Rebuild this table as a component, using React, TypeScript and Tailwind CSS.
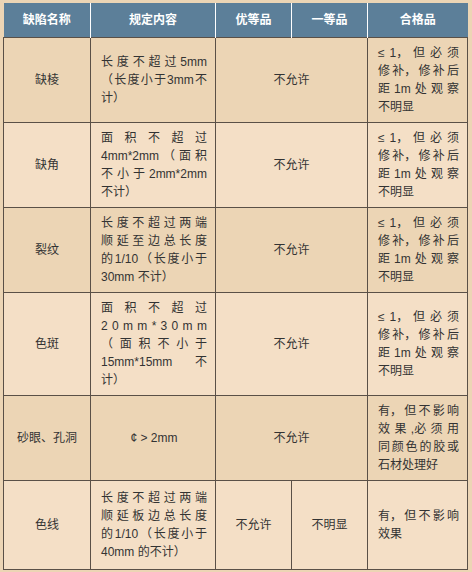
import React from "react";

const J = ({ t }: { t: string }) => (
  <div className="flex justify-between h-[18px]">
    {t.split(" ").map((x, i) => (
      <span key={i}>{x}</span>
    ))}
  </div>
);
const L = ({ t }: { t: string }) => <div className="h-[18px] whitespace-pre">{t}</div>;

const Para = ({ lines }: { lines: string[] }) => (
  <div className="text-left">
    {lines.map((l, i) => (i === lines.length - 1 ? <L key={i} t={l} /> : <J key={i} t={l} />))}
  </div>
);

const ok1 = ["≤ 1， 但 必 须", "修 补， 修 补 后", "距 1m 处 观 察", "不明显"];

type Row = {
  name: string;
  spec: string[] | string;
  merged?: string;
  a?: string;
  b?: string;
  ok: string[];
  h: string;
  bg: string;
};

const rows: Row[] = [
  { name: "缺棱", spec: ["长 度 不 超 过 5mm", "（ 长 度 小 于 3mm 不", "计）"], merged: "不允许", ok: ok1, h: "h-[84px]", bg: "bg-[#ecd5b5]" },
  { name: "缺角", spec: ["面 积 不 超 过", "4mm*2mm （ 面 积", "不 小 于 2mm*2mm", "不计）"], merged: "不允许", ok: ok1, h: "h-[85px]", bg: "bg-[#f4dfc6]" },
  { name: "裂纹", spec: ["长 度 不 超 过 两 端", "顺 延 至 边 总 长 度", "的 1/10 （ 长 度 小 于", "30mm 不计）"], merged: "不允许", ok: ok1, h: "h-[85px]", bg: "bg-[#ecd5b5]" },
  { name: "色斑", spec: ["面 积 不 超 过", "2 0 m m * 3 0 m m", "（ 面 积 不 小 于", "15mm*15mm 不", "计）"], merged: "不允许", ok: ok1, h: "h-[102px]", bg: "bg-[#f4dfc6]" },
  { name: "砂眼、孔洞", spec: "¢ > 2mm", merged: "不允许", ok: ["有， 但 不 影 响", "效 果 ,必 须 用", "同 颜 色 的 胶 或", "石材处理好"], h: "h-[85px]", bg: "bg-[#ecd5b5]" },
  { name: "色线", spec: ["长 度 不 超 过 两 端", "顺 延 板 边 总 长 度", "的 1/10 （ 长 度 小 于", "40mm 的不计）"], a: "不允许", b: "不明显", ok: ["有， 但 不 影 响", "效果"], h: "h-[89px]", bg: "bg-[#f4dfc6]" },
];

export default function App() {
  const td = "border border-[#5a5047] align-middle";
  return (
    <div
      className="w-[472px] h-[572px] bg-[#ecd5b5] pt-[3px] pl-[3px] text-[12px] leading-[18px] text-[#333]"
      style={{ fontFamily: '"Liberation Sans", "Noto Sans CJK SC", sans-serif' }}
    >
      <table className="table-fixed border-collapse w-[464px]">
        <colgroup>
          <col className="w-[87px]" />
          <col className="w-[125px]" />
          <col className="w-[76px]" />
          <col className="w-[76px]" />
          <col className="w-[100px]" />
        </colgroup>
        <thead>
          <tr className="h-[34px] bg-[#5c7f99] text-white font-bold">
            <th className="border-r border-white font-bold">缺陷名称</th>
            <th className="border-r border-white font-bold">规定内容</th>
            <th className="border-r border-white font-bold">优等品</th>
            <th className="border-r border-white font-bold">一等品</th>
            <th className="font-bold">合格品</th>
          </tr>
        </thead>
        <tbody>
          {rows.map((r, i) => (
            <tr key={i} className={`${r.h} ${r.bg}`}>
              <td className={`${td} text-center`}>{r.name}</td>
              <td className={`${td} pl-[10px] pr-[8px] py-[6px]`}>
                {typeof r.spec === "string" ? (
                  <div className="text-center">{r.spec}</div>
                ) : (
                  <Para lines={r.spec} />
                )}
              </td>
              {r.merged ? (
                <td colSpan={2} className={`${td} text-center`}>
                  {r.merged}
                </td>
              ) : (
                <>
                  <td className={`${td} text-center`}>{r.a}</td>
                  <td className={`${td} text-center`}>{r.b}</td>
                </>
              )}
              <td className={`${td} pl-[10px] pr-[8px] py-[6px]`}>
                <Para lines={r.ok} />
              </td>
            </tr>
          ))}
        </tbody>
      </table>
    </div>
  );
}
